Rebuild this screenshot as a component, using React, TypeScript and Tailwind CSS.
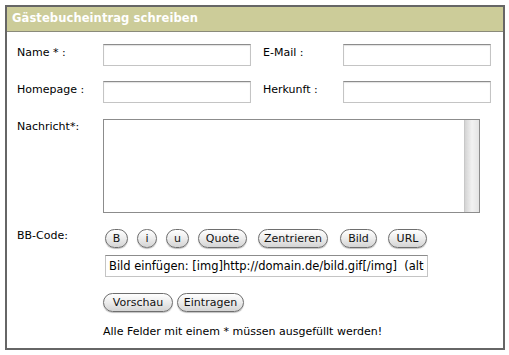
import { useState } from 'react';

const font = 'font-["DejaVu_Sans",Verdana,sans-serif]';

// Aqua-artige Pillen-Buttons
const PillButton = ({ label, w }: { label: string; w: string }) => (
  <button
    type="button"
    className={`${w} h-[19px] rounded-full border border-[#6e6e6e] bg-linear-to-b from-[#ffffff] via-[#ececec] to-[#d4d4d4] shadow-[0_1px_1px_rgba(0,0,0,0.25)] text-[11px] leading-none text-[#111111] flex items-center justify-center ${font}`}
  >
    {label}
  </button>
);

const TextInput = ({ value = '' }: { value?: string }) => (
  <input
    type="text"
    defaultValue={value}
    className="w-[148px] h-[22px] bg-white border border-[#c4c4c4] border-t-[#8c8c8c] shadow-[inset_0_1px_1px_rgba(0,0,0,0.12)] outline-none"
  />
);

const App = () => {
  const [message, setMessage] = useState('');

  return (
    <div className={`w-[509px] h-[355px] bg-white pt-[5px] pl-[5px] ${font}`}>
      <div className="w-[500px] h-[345px] border-2 border-[#666666] flex flex-col">
        {/* Kopfzeile */}
        <div className="h-[25px] bg-[#cccc99] border-b border-[#8a8a7a] flex items-center pl-[5px]">
          <span className="text-[11.5px] font-bold text-white tracking-[0.1px]">Gästebucheintrag schreiben</span>
        </div>

        <div className="flex flex-col pl-[10px] pt-[12px] text-[11px] leading-[14px] text-black">
          {/* Name / E-Mail */}
          <div className="flex items-start">
            <label className="w-[86px] pt-[2px]">Name * :</label>
            <TextInput />
            <label className="w-[80px] ml-[12px] pt-[2px]">E-Mail :</label>
            <TextInput />
          </div>

          {/* Homepage / Herkunft */}
          <div className="flex items-start mt-[15px]">
            <label className="w-[86px] pt-[2px]">Homepage :</label>
            <TextInput />
            <label className="w-[80px] ml-[12px] pt-[2px]">Herkunft :</label>
            <TextInput />
          </div>

          {/* Nachricht */}
          <div className="flex items-start mt-[16px]">
            <label className="w-[86px] pt-[1px]">Nachricht*:</label>
            <div className="w-[377px] h-[94px] border border-[#8c8c8c] flex bg-white">
              <textarea
                value={message}
                onChange={(e) => setMessage(e.target.value)}
                className="flex-1 resize-none outline-none p-1 text-[11px]"
              />
              <div className="w-[15px] h-full bg-linear-to-r from-[#d4d4d4] via-[#f2f2f2] to-[#e4e4e4] border-l border-[#c8c8c8]" />
            </div>
          </div>

          {/* BB-Code */}
          <div className="flex items-start mt-[16px]">
            <label className="w-[88px] pt-[0px]">BB-Code:</label>
            <div className="flex flex-col">
              <div className="flex items-center">
                <PillButton label="B" w="w-[23px]" />
                <div className="ml-[9px]"><PillButton label="i" w="w-[20px]" /></div>
                <div className="ml-[9px]"><PillButton label="u" w="w-[23px]" /></div>
                <div className="ml-[9px]"><PillButton label="Quote" w="w-[49px]" /></div>
                <div className="ml-[11px]"><PillButton label="Zentrieren" w="w-[70px]" /></div>
                <div className="ml-[12px]"><PillButton label="Bild" w="w-[37px]" /></div>
                <div className="ml-[11px]"><PillButton label="URL" w="w-[39px]" /></div>
              </div>
              <input
                type="text"
                readOnly
                value="Bild einfügen: [img]http://domain.de/bild.gif[/img]  (alternativ mit Button)"
                className="mt-[7px] w-[323px] h-[22px] px-[3px] bg-white border border-[#c4c4c4] border-t-[#8c8c8c] text-[11.5px] outline-none"
              />
            </div>
          </div>

          {/* Absenden */}
          <div className="flex items-center mt-[16px] ml-[86px]">
            <PillButton label="Vorschau" w="w-[70px]" />
            <div className="ml-[4px]"><PillButton label="Eintragen" w="w-[67px]" /></div>
          </div>

          <p className="mt-[13px] ml-[86px]">Alle Felder mit einem * müssen ausgefüllt werden!</p>
        </div>
      </div>
    </div>
  );
};

export default App;
